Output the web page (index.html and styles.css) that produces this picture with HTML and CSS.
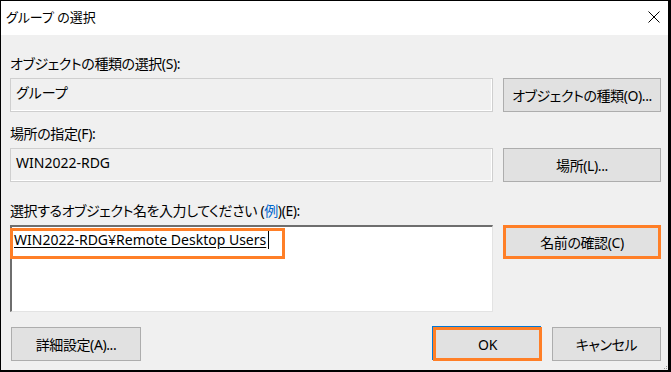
FILE: index.html
```html
<!DOCTYPE html>
<html lang="ja">
<head>
    <meta charset="UTF-8">
    <title>グループ の選択</title>
    <link rel="stylesheet" href="styles.css">
</head>
<body>
    <div class="window">
        <div class="titlebar">
            <span class="title">グループ の選択</span>
            <svg class="close" width="12" height="12" viewBox="0 0 12 12">
                <path d="M0.5 0.5 L11.5 11.5 M11.5 0.5 L0.5 11.5" stroke="#000" stroke-width="1"/>
            </svg>
        </div>
        <div class="content">
            <div class="label">オブジェクトの種類の選択(S):</div>
            <div class="row">
                <div class="field">グループ</div>
                <button class="button">オブジェクトの種類(O)...</button>
            </div>

            <div class="label">場所の指定(F):</div>
            <div class="row">
                <div class="field">WIN2022-RDG</div>
                <button class="button">場所(L)...</button>
            </div>

            <div class="label spaced">選択するオブジェクト名を入力してください (<span class="link">例</span>)(E):</div>
            <div class="row">
                <div class="memo">
                    <span class="entry">WIN2022-RDG¥Remote Desktop Users</span><span class="caret"></span>
                    <div class="mark"></div>
                </div>
                <button class="button highlight">名前の確認(C)</button>
            </div>

            <div class="footer">
                <button class="button small">詳細設定(A)...</button>
                <div class="actions">
                    <button class="button ok highlight">OK</button>
                    <button class="button cancel">キャンセル</button>
                </div>
            </div>
        </div>
        <svg class="grip" width="4" height="4" viewBox="0 0 4 4">
            <rect x="2" y="0" width="1" height="1" fill="#999"/>
            <rect x="0" y="2" width="1" height="1" fill="#999"/>
            <rect x="2" y="2" width="1" height="1" fill="#999"/>
        </svg>
    </div>
</body>
</html>
```

FILE: styles.css
```css
body {
    margin: 0;
    font-family: "Noto Sans", "Noto Sans CJK JP", sans-serif;
    font-feature-settings: "palt";
    color: #000;
    background: #fff;
}
.window {
    position: relative;
    width: 671px;
    height: 372px;
    box-sizing: border-box;
    border: 1px solid #000;
    border-right-width: 3px;
    border-bottom-width: 2px;
    background: #f0f0f0;
    display: flex;
    flex-direction: column;
}
.titlebar {
    height: 34px;
    background: #fff;
    display: flex;
    align-items: center;
    justify-content: space-between;
    padding: 0 8px 3px 5px;
    box-sizing: border-box;
    flex-shrink: 0;
}
.title {
    font-size: 13px;
}
.content {
    flex: 1;
    padding: 20px 7px 0 9px;
}
.label {
    font-size: 14px;
    letter-spacing: -0.4px;
    line-height: 17px;
    margin-bottom: 6px;
}
.spaced {
    margin-top: 20px;
}
.label + .row {
    margin-bottom: 13px;
}
.row {
    display: flex;
    gap: 10px;
    align-items: flex-start;
}
.field {
    flex: 1;
    height: 34px;
    box-sizing: border-box;
    border: 1px solid #cfcfcf;
    box-shadow: inset -1px -1px 0 #fff;
    padding: 0 5px;
    font-size: 14px;
    line-height: 27px;
}
.button {
    width: 158px;
    height: 34px;
    box-sizing: border-box;
    background: #e1e1e1;
    border: 1px solid #adadad;
    font-family: inherit;
    font-feature-settings: "palt";
    font-size: 14px;
    letter-spacing: -0.4px;
    color: #000;
    padding: 0;
}
.highlight {
    border: 3px solid #ff7f27;
}
.memo {
    position: relative;
    flex: 1;
    height: 87px;
    box-sizing: border-box;
    background: #fff;
    border-top: 2px solid #6e6e6e;
    border-left: 2px solid #6e6e6e;
    border-right: 1px solid #e3e3e3;
    border-bottom: 1px solid #e3e3e3;
    padding: 3px 2px;
    font-size: 14px;
    line-height: 20px;
}
.entry {
    text-decoration: underline;
    text-underline-offset: 2px;
}
.caret {
    display: inline-block;
    width: 1px;
    height: 19px;
    background: #000;
    vertical-align: -4px;
    margin-left: 2px;
}
.mark {
    position: absolute;
    left: -2px;
    top: 1px;
    width: 275px;
    height: 31px;
    box-sizing: border-box;
    border: 3px solid #ff7f27;
}
.link {
    color: #0066cc;
}
.footer {
    display: flex;
    justify-content: space-between;
    margin-top: 15px;
}
.small {
    width: 130px;
    margin-left: 1px;
}
.actions {
    display: flex;
    gap: 10px;
}
.ok {
    width: 109px;
    box-shadow: -1px -1px 0 #0078d7;
}
.cancel {
    width: 109px;
}
.grip {
    position: absolute;
    right: 0;
    bottom: 0;
}
```
